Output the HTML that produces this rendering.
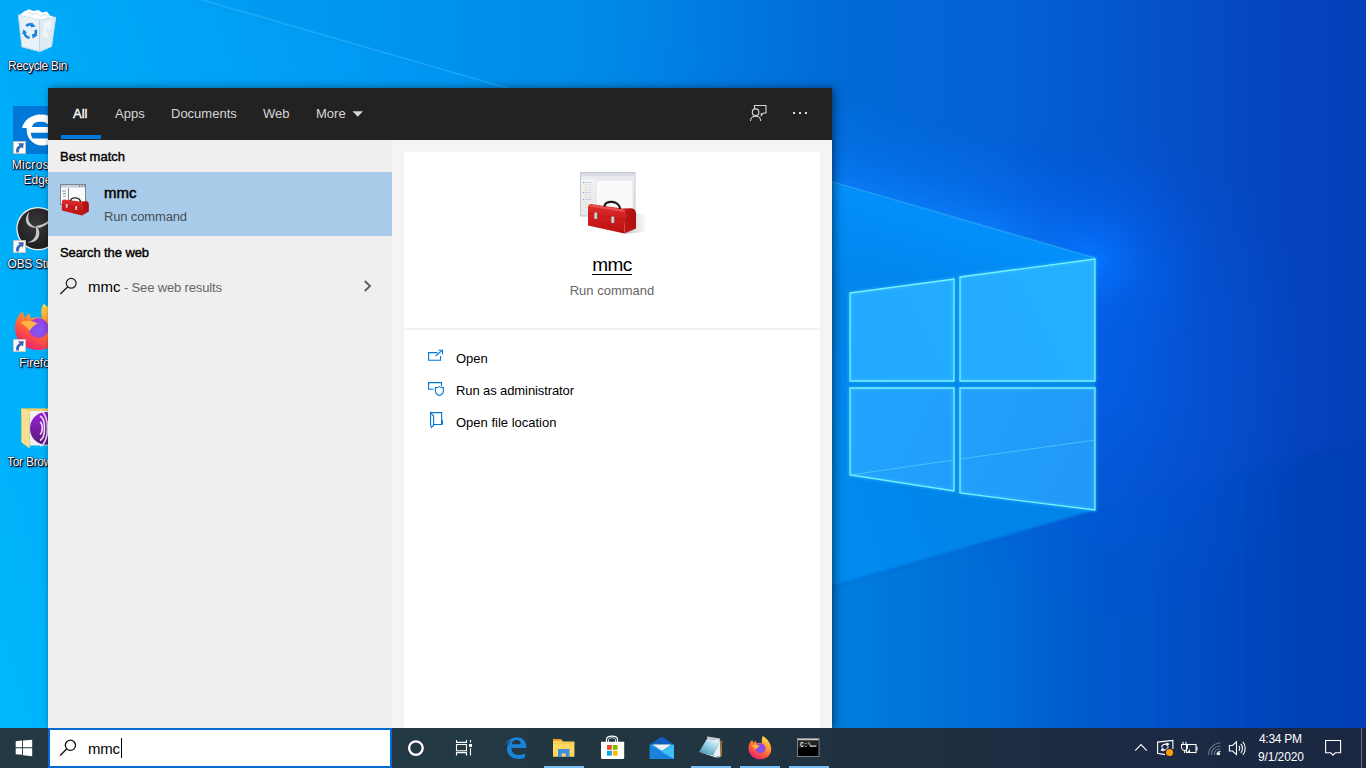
<!DOCTYPE html>
<html><head><meta charset="utf-8">
<style>
html,body{margin:0;padding:0}
body{width:1366px;height:768px;overflow:hidden;position:relative;font-family:"Liberation Sans",sans-serif;background:#0a6ad6}
.abs{position:absolute}
#bg{position:absolute;left:0;top:0}
/* panel */
#panel{position:absolute;left:48px;top:88px;width:784px;height:640px;background:#efefef;box-shadow:3px 0 9px rgba(0,0,0,.42),0 0 3px rgba(0,0,0,.12)}
#hdr{position:absolute;left:0;top:0;width:784px;height:52px;background:#222}
.tab{position:absolute;top:18px;font-size:13px;color:#d6d6d6;white-space:nowrap}
#left{position:absolute;left:0;top:52px;width:344px;height:588px;background:#efefef}
#gap{position:absolute;left:344px;top:52px;width:440px;height:588px;background:#f4f4f4}
#card{position:absolute;left:356px;top:64px;width:416px;height:576px;background:#fff}
.t{position:absolute;white-space:nowrap}
/* taskbar */
#tb{position:absolute;left:0;top:728px;width:1366px;height:40px;background:linear-gradient(90deg,#233842 0%,#223842 36%,#223542 50%,#1f2e40 70%,#1c2a43 82%,#1b2741 100%)}
.ul{position:absolute;top:38px;height:2px;width:40px;background:#78bdf4}
.dlabel{position:absolute;color:#fff;font-size:12px;line-height:15px;text-shadow:1px 1px 1px #000018,0 0 1px #000018,0 0 1px #000018,1px 1px 2px rgba(0,0,30,.9);white-space:nowrap;text-align:center}
</style></head>
<body>
<svg id="bg" width="1366" height="768" viewBox="0 0 1366 768">
 <defs>
  <linearGradient id="gTop" x1="0" y1="0" x2="1366" y2="0" gradientUnits="userSpaceOnUse">
   <stop offset="0" stop-color="#00a8f8"/>
   <stop offset="0.44" stop-color="#008ae8"/>
   <stop offset="0.615" stop-color="#016ad6"/>
   <stop offset="0.737" stop-color="#0461d8"/>
   <stop offset="0.81" stop-color="#0457cd"/>
   <stop offset="0.883" stop-color="#054cc4"/>
   <stop offset="0.95" stop-color="#0542bc"/>
   <stop offset="1" stop-color="#0440b8"/>
  </linearGradient>
  <linearGradient id="gBeam" x1="0" y1="650" x2="900" y2="350" gradientUnits="userSpaceOnUse">
   <stop offset="0" stop-color="#00b6fc"/>
   <stop offset="0.32" stop-color="#00a6f7"/>
   <stop offset="0.93" stop-color="#0088ee"/>
   <stop offset="1" stop-color="#0484e8"/>
  </linearGradient>
  <linearGradient id="gFloor" x1="832" y1="0" x2="1366" y2="0" gradientUnits="userSpaceOnUse">
   <stop offset="0" stop-color="#057ede"/>
   <stop offset="0.127" stop-color="#0077d9"/>
   <stop offset="0.326" stop-color="#0369d5"/>
   <stop offset="0.513" stop-color="#0457cb"/>
   <stop offset="0.7" stop-color="#044cc4"/>
   <stop offset="0.876" stop-color="#0441b6"/>
   <stop offset="1" stop-color="#043fb4"/>
  </linearGradient>
  <radialGradient id="gGlow" cx="1095" cy="260" r="115" gradientUnits="userSpaceOnUse">
   <stop offset="0" stop-color="#0474ff" stop-opacity="1"/>
   <stop offset="0.45" stop-color="#0468f4" stop-opacity="0.38"/>
   <stop offset="1" stop-color="#0460f0" stop-opacity="0"/>
  </radialGradient>
  <radialGradient id="gGlowB" cx="0" cy="0" r="1" gradientUnits="userSpaceOnUse" gradientTransform="translate(1110,370) scale(220,260)">
   <stop offset="0" stop-color="#0466f8" stop-opacity="0.5"/>
   <stop offset="0.5" stop-color="#0458e8" stop-opacity="0.3"/>
   <stop offset="1" stop-color="#0450e0" stop-opacity="0"/>
  </radialGradient>
  <linearGradient id="gPane" x1="850" y1="260" x2="1095" y2="510" gradientUnits="userSpaceOnUse">
   <stop offset="0" stop-color="#28a6fc"/>
   <stop offset="0.45" stop-color="#27a8ff"/>
   <stop offset="1" stop-color="#1a94f6"/>
  </linearGradient>
  <filter id="blur1" filterUnits="userSpaceOnUse" x="-500" y="-100" width="2000" height="1200"><feGaussianBlur stdDeviation="1.2"/></filter>
  <linearGradient id="gPaneT" x1="850" y1="380" x2="1095" y2="260" gradientUnits="userSpaceOnUse"><stop offset="0" stop-color="#22a8ff"/><stop offset="1" stop-color="#25b0ff"/></linearGradient>
  <linearGradient id="gPaneB" x1="850" y1="390" x2="1095" y2="510" gradientUnits="userSpaceOnUse"><stop offset="0" stop-color="#22a4fe"/><stop offset="1" stop-color="#2198f8"/></linearGradient>
  <linearGradient id="gBelow" x1="1000" y1="230.6" x2="969" y2="336" gradientUnits="userSpaceOnUse">
   <stop offset="0" stop-color="#0492ff" stop-opacity="0.85"/>
   <stop offset="0.55" stop-color="#0490ff" stop-opacity="0.4"/>
   <stop offset="1" stop-color="#0490ff" stop-opacity="0"/>
  </linearGradient>
  <filter id="blur05" filterUnits="userSpaceOnUse" x="-500" y="-100" width="2000" height="1200"><feGaussianBlur stdDeviation="0.6"/></filter>
  <filter id="blur15" filterUnits="userSpaceOnUse" x="-500" y="-100" width="2000" height="1200"><feGaussianBlur stdDeviation="1.5"/></filter>
  <filter id="blur3" filterUnits="userSpaceOnUse" x="-500" y="-100" width="2000" height="1200"><feGaussianBlur stdDeviation="3"/></filter>
  <linearGradient id="gAbove" x1="1025" y1="144" x2="1000" y2="230.6" gradientUnits="userSpaceOnUse">
   <stop offset="0" stop-color="#0a7cff" stop-opacity="0"/>
   <stop offset="0.6" stop-color="#0a7cff" stop-opacity="0.3"/>
   <stop offset="1" stop-color="#0c82ff" stop-opacity="0.7"/>
  </linearGradient>
  <linearGradient id="gAboveMask" x1="600" y1="0" x2="1150" y2="0" gradientUnits="userSpaceOnUse">
   <stop offset="0" stop-color="#fff" stop-opacity="0"/>
   <stop offset="0.45" stop-color="#fff" stop-opacity="1"/>
   <stop offset="0.85" stop-color="#fff" stop-opacity="1"/>
   <stop offset="1" stop-color="#fff" stop-opacity="0"/>
  </linearGradient>
  <linearGradient id="gAboveMask2" x1="600" y1="0" x2="1095" y2="0" gradientUnits="userSpaceOnUse">
   <stop offset="0" stop-color="#fff" stop-opacity="0"/>
   <stop offset="0.5" stop-color="#fff" stop-opacity="1"/>
   <stop offset="0.8" stop-color="#fff" stop-opacity="1"/>
   <stop offset="1" stop-color="#fff" stop-opacity="0.2"/>
  </linearGradient>
  <mask id="mAbove2" maskUnits="userSpaceOnUse" x="0" y="0" width="1366" height="768"><rect x="0" y="0" width="1366" height="768" fill="url(#gAboveMask2)"/></mask>
  <mask id="mAbove" maskUnits="userSpaceOnUse" x="0" y="0" width="1366" height="768"><rect x="0" y="0" width="1366" height="768" fill="url(#gAboveMask)"/></mask>
 </defs>
 <rect x="0" y="0" width="1366" height="768" fill="url(#gTop)"/>
 <polygon points="1095,510 1366,440 1366,768 -400,940" fill="url(#gFloor)" filter="url(#blur3)"/>
 <rect x="0" y="0" width="1366" height="768" fill="url(#gGlowB)"/>
 <rect x="0" y="0" width="1366" height="768" fill="url(#gGlow)"/>
 <polygon points="600,117.3 1095,258.5 1095,100 600,-40" fill="url(#gAbove)" mask="url(#mAbove2)"/>
 <polygon points="190,0 1095,258 1095,510 -400,940 -400,0" fill="url(#gBeam)" filter="url(#blur1)"/>
 <polygon points="600,117.3 1095,258.5 1095,400 600,300" fill="url(#gBelow)" mask="url(#mAbove)"/>
 <line x1="190" y1="-3.5" x2="1095" y2="258" stroke="#30b8ff" stroke-width="1.6" opacity="0.55" filter="url(#blur05)"/>
 <g fill="url(#gPaneT)">
  <polygon points="850,293 954,279 954,381 850,381"/>
  <polygon points="960,277 1095,259 1095,381 960,381"/>
 </g>
 <g fill="url(#gPaneB)">
  <polygon points="850,388 954,388 954,491 850,475"/>
  <polygon points="960,388 1095,388 1095,510 960,493"/>
 </g>
 <g fill="none" stroke="#50e0ff" stroke-width="3" opacity="0.35" filter="url(#blur15)">
  <polygon points="850,293 954,279 954,381 850,381"/>
  <polygon points="960,277 1095,259 1095,381 960,381"/>
  <polygon points="850,388 954,388 954,491 850,475"/>
  <polygon points="960,388 1095,388 1095,510 960,493"/>
 </g>
 <g fill="none" stroke="#78f0ff" stroke-width="1.3">
  <polygon points="850,293 954,279 954,381 850,381"/>
  <polygon points="960,277 1095,259 1095,381 960,381"/>
  <polygon points="850,388 954,388 954,491 850,475"/>
  <polygon points="960,388 1095,388 1095,510 960,493"/>
 </g>
 <g stroke="#5fd8ff" stroke-width="1" opacity="0.6">
  <line x1="850" y1="475" x2="954" y2="460"/>
  <line x1="960" y1="459" x2="1095" y2="440"/>
 </g>
</svg>

<!-- desktop icons -->
<div id="desk">
 <svg class="abs" style="left:0;top:0" width="80" height="480" viewBox="0 0 80 480">
  <defs>
   <linearGradient id="gFf" x1="52" y1="306" x2="26" y2="350" gradientUnits="userSpaceOnUse">
    <stop offset="0" stop-color="#ffe84a"/><stop offset="0.3" stop-color="#ffa436"/><stop offset="0.65" stop-color="#ff5a3a"/><stop offset="1" stop-color="#e8177e"/>
   </linearGradient>
   <radialGradient id="gFfc" cx="0.55" cy="0.6" r="0.6"><stop offset="0" stop-color="#7a5cf5"/><stop offset="1" stop-color="#a23be0"/></radialGradient>
   <linearGradient id="gBin" x1="0" y1="0" x2="1" y2="0"><stop offset="0" stop-color="#cfe6f4"/><stop offset="0.5" stop-color="#f2f6f8"/><stop offset="1" stop-color="#d6e8f2"/></linearGradient>
   <filter id="tsh" x="-20%" y="-20%" width="140%" height="140%"><feDropShadow dx="0" dy="1" stdDeviation="0.6" flood-color="#000" flood-opacity="0.6"/></filter>
  </defs>
  <!-- recycle bin -->
  <g>
   <path d="M18.2,14.8 L39.5,19.5 L55.7,17.2 L51.6,46.4 L39.6,51.6 L21.9,46.9 Z" fill="#e9f1f6"/>
   <path d="M39.5,19.5 L55.7,17.2 L51.6,46.4 L39.6,51.6 Z" fill="#dfeaf2"/>
   <path d="M18.2,14.8 L39.5,19.5 L39.6,51.6 L21.9,46.9 Z" fill="none" stroke="#b5d9ee" stroke-width="1"/>
   <path d="M39.5,19.5 L55.7,17.2 L51.6,46.4 L39.6,51.6" fill="none" stroke="#bfe0f2" stroke-width="1"/>
   <path d="M19.5,15 L24,11.5 L29,9.3 L33.5,11 L38.5,10 L42,12.5 L47,11.5 L50,15.5 L54.5,17 L39.5,19.5 Z" fill="#ffffff"/>
   <path d="M28,12 L33,14.5 L36,12.5 L40,16.5 L45,14 L48,17.5" fill="none" stroke="#c8d0d6" stroke-width="0.8"/>
   <path d="M44,22 L52,20 L50,30 L46,28 L48,38 L43,36 Z" fill="#f4f7f9" opacity="0.8"/>
   <g fill="none" stroke="#1d82dc" stroke-width="2.6">
    <path d="M26.2,26.2 C27.8,24.5 30.5,24 32.6,25"/>
    <path d="M35.6,29.8 C36.3,32 35.8,34.6 34,36.2"/>
    <path d="M29.6,37.8 C27.2,37.4 25.2,35.6 24.6,33.2"/>
   </g>
   <g fill="#1d82dc">
    <path d="M31.5,22.6 L35.8,26.4 L30.8,27.6 Z"/>
    <path d="M37.6,35 L32.6,38.6 L32,34 Z"/>
    <path d="M22.2,34.6 L23.4,29.2 L27,32.6 Z"/>
   </g>
  </g>
  <!-- edge tile -->
  <rect x="13" y="106" width="48" height="48" fill="#0078d7"/>
  <circle cx="42.3" cy="130" r="15.6" fill="#fff"/>
  <path d="M22,128.2 C23.5,120.5 31,114.6 40,114.4 L40,119.5 C33.5,120.5 29,124 27.5,128.5 C25.5,128 23.5,128 22,128.2 Z" fill="#fff"/>
  <path d="M32,127 C32.6,123.6 35.8,121.8 40.5,121.8 C45.2,121.8 48.4,123.6 49,127 Z" fill="#0078d7"/>
  <path d="M30.8,132.7 L62,132.7 L62,138.6 L32.6,138.6 C31.6,136.9 31,134.9 30.8,132.7 Z" fill="#0078d7"/>
  <!-- OBS -->
  <defs><radialGradient id="gObs" cx="0.45" cy="0.4" r="0.6"><stop offset="0" stop-color="#3a383b"/><stop offset="1" stop-color="#1e1d1f"/></radialGradient></defs>
  <circle cx="38" cy="228.6" r="21.7" fill="#f2f2f2"/>
  <circle cx="38" cy="228.6" r="20.4" fill="url(#gObs)"/>
  <path d="M29.5,211.5 C24.5,216.5 24.5,224.5 31,227 C33.5,228 36,227.8 37.5,227.2 C34,226.8 30.5,225 29,221.5 C27.8,218.5 28,215 29.5,211.5 Z" fill="#c8c8c8"/>
  <path d="M36.5,225.8 C40,225.5 44,224 48,221 L48,223.5 C44.5,226 41,227.6 38.5,228 Z" fill="#c8c8c8"/>
  <path d="M36.5,226 C39.5,229.5 40.5,235 37.5,239 C35,242 31,243 27.5,242.3 C31,241.5 34,239.5 35.2,236.5 C36.5,233 36.5,229.5 35.5,227 Z" fill="#c8c8c8"/>
  <!-- Firefox -->
  <path d="M22.5,311.6 L25,318 L28.8,312.8 L31,318.5 C34.5,317 38.5,317 42,318 C40.5,312 41.2,307.5 43.6,303.8 C53,310 60,319 60,330 C60,342 50,350 38,350 C25.5,350 15,340.5 15,328.5 C15,321 18,315 22.5,311.6 Z" fill="url(#gFf)"/>
  <circle cx="38.5" cy="328" r="10" fill="url(#gFfc)"/>
  <path d="M20.5,322.5 C25,320.5 32,320.5 37.5,323.5 C34.5,325 31.5,327.5 29.5,331 C27.5,327.5 24.5,325 20.5,322.5 Z" fill="#ffb540"/>
  <!-- Tor folder -->
  <rect x="21.3" y="408.4" width="40" height="4" fill="#f3cd5e"/>
  <rect x="29.7" y="411" width="32" height="34.5" fill="#f2f2f2"/>
  <path d="M21.3,408.4 L29.7,411 L29.7,448.5 L21.3,442.3 Z" fill="#fbdf8c"/>
  <defs><linearGradient id="gTor" x1="0" y1="0" x2="0" y2="1"><stop offset="0" stop-color="#9b20d8"/><stop offset="1" stop-color="#581a78"/></linearGradient></defs>
  <ellipse cx="46" cy="428.4" rx="16" ry="16.4" fill="url(#gTor)"/>
  <g fill="none" stroke="#f0e4f6" stroke-width="1.6">
   <path d="M40,422 C43,424 43,432 40,434.5"/>
   <path d="M40,416 C46,419 46,437.5 40,440.5"/>
   <path d="M40,410.5 C50,414 50,443 40,446"/>
  </g>
  <!-- shortcut arrows -->
  <g>
   <rect x="13.4" y="141.4" width="12.2" height="12.2" fill="#fbfbfb" stroke="#cdbfb3" stroke-width="0.8"/>
   <path d="M16.2,152.5 C15.6,149 16.8,146.5 19.6,145.5 L18.2,143.3 L23.8,143.3 L23,148.5 L21.4,147.2 C19.6,148 18.6,150 18.9,152.5 Z" fill="#3466b2"/>
   <rect x="13.4" y="240.4" width="12.2" height="12.2" fill="#fbfbfb" stroke="#cdbfb3" stroke-width="0.8"/>
   <path d="M16.2,251.5 C15.6,248 16.8,245.5 19.6,244.5 L18.2,242.3 L23.8,242.3 L23,247.5 L21.4,246.2 C19.6,247 18.6,249 18.9,251.5 Z" fill="#3466b2"/>
   <rect x="13.4" y="339.4" width="12.2" height="12.2" fill="#fbfbfb" stroke="#cdbfb3" stroke-width="0.8"/>
   <path d="M16.2,350.5 C15.6,347 16.8,344.5 19.6,343.5 L18.2,341.3 L23.8,341.3 L23,346.5 L21.4,345.2 C19.6,346 18.6,348 18.9,350.5 Z" fill="#3466b2"/>
  </g>
 </svg>
 <div class="dlabel" style="left:0;width:75px;top:58.8px;letter-spacing:-0.41px">Recycle Bin</div>
 <div class="dlabel" style="left:0;width:75px;top:157.8px;line-height:14.7px"><span style="letter-spacing:0.32px">Microsoft</span><br>Edge</div>
 <div class="dlabel" style="left:0;width:75px;top:256.8px;letter-spacing:-0.29px">OBS Studio</div>
 <div class="dlabel" style="left:0;width:75px;top:356px">Firefox</div>
 <div class="dlabel" style="left:0;width:75px;top:454.8px;letter-spacing:-0.27px">Tor Browser</div>
</div>

<div id="panel">
 <div id="hdr">
  <div class="tab" style="left:25px;color:#fff;-webkit-text-stroke:0.35px #fff">All</div>
  <div class="tab" style="left:67px">Apps</div>
  <div class="tab" style="left:123px">Documents</div>
  <div class="tab" style="left:215px">Web</div>
  <div class="tab" style="left:268px">More</div>
  <div class="abs" style="left:13px;top:47px;width:40px;height:4px;background:#0078d7"></div>
  <svg class="abs" style="left:0;top:0" width="784" height="52" viewBox="48 88 784 52">
   <path d="M352.5,111.3 L363,111.3 L357.75,116.8 Z" fill="#d6d6d6"/>
   <g fill="none" stroke="#d8d8d8" stroke-width="1.1">
    <path d="M754.5,109 L754.5,105.5 L766,105.5 L766,113 L763.5,113 L761.3,115.5 L761.3,113"/>
    <circle cx="755.6" cy="112.2" r="3.3"/>
    <path d="M750.5,121 C750.5,114.5 760.7,114.5 760.7,121"/>
   </g>
   <g fill="#e0e0e0"><rect x="793" y="112" width="2" height="2"/><rect x="799" y="112" width="2" height="2"/><rect x="805" y="112" width="2" height="2"/></g>
  </svg>
 </div>
 <div id="left">
  
  <div class="t" style="left:12px;top:9px;font-size:13px;color:#000;-webkit-text-stroke:0.4px #000">Best match</div>
  <div class="abs" style="left:0;top:32px;width:344px;height:64px;background:#a8cbe9"></div>
  <div class="t" style="left:56px;top:44px;font-size:15px;color:#000;-webkit-text-stroke:0.45px #000">mmc</div>
  <div class="t" style="left:56px;top:69px;font-size:13px;color:#464e57;letter-spacing:-0.15px">Run command</div>
  <div class="t" style="left:12px;top:105px;font-size:13px;color:#000;-webkit-text-stroke:0.4px #000;letter-spacing:-0.1px">Search the web</div>
  <div class="t" style="left:40px;top:138px;font-size:15px;color:#000">mmc<span style="font-size:13px;color:#666;letter-spacing:-0.15px"> - See web results</span></div>
   <svg class="abs" style="left:0;top:0" width="344" height="200" viewBox="48 140 344 200">
   <!-- small mmc icon -->
   <rect x="60.5" y="184.5" width="25" height="20" fill="#fbfbfb" stroke="#7d8594" stroke-width="1"/>
   <rect x="61" y="185" width="24" height="2.5" fill="#c9ced8"/>
   <rect x="79" y="185.5" width="1.2" height="1.2" fill="#5d6a80"/><rect x="81.5" y="185.5" width="1.2" height="1.2" fill="#5d6a80"/><rect x="84" y="185.5" width="1" height="1.2" fill="#5d6a80"/>
   <line x1="68.5" y1="188" x2="68.5" y2="204" stroke="#7d8594" stroke-width="1"/>
   <g stroke="#8a95a8" stroke-width="1"><line x1="62" y1="191" x2="66" y2="191"/><line x1="63" y1="193.5" x2="66" y2="193.5"/><line x1="63" y1="196" x2="66" y2="196"/></g>
   <path d="M62,201.5 C62,200 63,199.3 64.5,199.5 L80,201.5 C81.5,201.7 82.2,203 82.2,205.5 L82,215.6 L61.8,210.6 Z" fill="url(#gTbF)"/>
   <path d="M82.2,205.5 C82.2,203 81.5,201.7 80,201.5 L86.5,201.2 C88,201.4 88.8,202.5 88.8,204 L88.8,211.6 L82,215.6 Z" fill="url(#gTbS)"/>
   <path d="M62,205 L82,209.5 L88.8,207" fill="none" stroke="#9e0e0e" stroke-width="0.6" opacity="0.6"/>
   <path d="M70.5,201 C70.5,196.5 80,197 80.5,202" fill="none" stroke="#1e1e1e" stroke-width="1.3"/>
   <rect x="65.8" y="204" width="1.8" height="3.6" fill="#d8d8d8"/><rect x="75.3" y="206.2" width="1.8" height="3.6" fill="#d8d8d8"/>
   <!-- search icon -->
   <circle cx="71.2" cy="283.3" r="4.9" fill="none" stroke="#1a1a1a" stroke-width="1.2"/>
   <line x1="67.6" y1="287" x2="60.3" y2="294" stroke="#1a1a1a" stroke-width="1.3"/>
   <!-- chevron -->
   <path d="M364.8,281 L370,286 L364.8,291" fill="none" stroke="#5a5a5a" stroke-width="1.8"/>
  </svg>
 </div>
 <div id="gap"></div>
 <div id="card">
  <div class="t" style="left:0;width:416px;text-align:center;top:102px;font-size:19px;color:#000;letter-spacing:-0.6px"><span style="border-bottom:1.2px solid #000;line-height:16.5px;display:inline-block">mmc</span></div>
  <div class="t" style="left:0;width:416px;text-align:center;top:131px;font-size:13px;color:#666">Run command</div>
  <div class="abs" style="left:0;top:176px;width:416px;height:2px;background:#f2f2f2"></div>
  <div class="t" style="left:52px;top:199px;font-size:13px;color:#000">Open</div>
  <div class="t" style="left:52px;top:231px;font-size:13px;color:#000;letter-spacing:-0.1px">Run as administrator</div>
  <div class="t" style="left:52px;top:263px;font-size:13px;color:#000">Open file location</div>
  <svg class="abs" style="left:0;top:0" width="416" height="300" viewBox="404 152 416 300">
   <defs>
    <linearGradient id="gTbF" x1="0" y1="0" x2="0" y2="1"><stop offset="0" stop-color="#e03030"/><stop offset="0.45" stop-color="#d01c1c"/><stop offset="1" stop-color="#b81212"/></linearGradient>
    <linearGradient id="gTbS" x1="0" y1="0" x2="1" y2="0"><stop offset="0" stop-color="#c81818"/><stop offset="1" stop-color="#a80e0e"/></linearGradient>
    <linearGradient id="gWin" x1="0" y1="0" x2="0" y2="1"><stop offset="0" stop-color="#f4f5f7"/><stop offset="1" stop-color="#e6e8ec"/></linearGradient>
    <linearGradient id="gSh" x1="0" y1="0" x2="1" y2="0"><stop offset="0" stop-color="#000" stop-opacity="0.25"/><stop offset="1" stop-color="#000" stop-opacity="0"/></linearGradient>
   </defs>
   <!-- big mmc icon -->
   <rect x="580.5" y="172.5" width="54.5" height="43.5" fill="url(#gWin)" stroke="#c2c6ce" stroke-width="1"/>
   <rect x="581" y="173" width="53.5" height="3.5" fill="#d9dce2"/>
   <rect x="581" y="176.5" width="53.5" height="3" fill="#e9ebef"/>
   <rect x="596" y="180" width="37" height="36" fill="#fafafa" stroke="#cfd3d9" stroke-width="0.6"/>
   <g fill="#7ea6e0"><rect x="583" y="182" width="1.2" height="1.2"/><rect x="583" y="192" width="1.2" height="1.2"/><rect x="583" y="199" width="1.2" height="1.2"/></g>
   <g fill="#c9ced6"><rect x="585" y="182" width="7" height="0.8"/><rect x="585" y="192" width="6" height="0.8"/><rect x="585" y="199" width="7" height="0.8"/></g>
   <g fill="#f0d080"><rect x="585" y="184.5" width="1.5" height="1.2"/><rect x="585" y="187" width="1.5" height="1.2"/><rect x="585" y="189.5" width="1.5" height="1.2"/><rect x="585" y="194.5" width="1.5" height="1.2"/><rect x="585" y="197" width="1.5" height="1.2"/><rect x="585" y="201.5" width="1.5" height="1.2"/><rect x="585" y="204" width="1.5" height="1.2"/><rect x="585" y="206.5" width="1.5" height="1.2"/></g>
   <g fill="#d8dce2"><rect x="587.5" y="184.6" width="5" height="0.8"/><rect x="587.5" y="187.1" width="5" height="0.8"/><rect x="587.5" y="189.6" width="5" height="0.8"/><rect x="587.5" y="194.6" width="5" height="0.8"/><rect x="587.5" y="197.1" width="5" height="0.8"/></g>
   <path d="M636,213 L647,217 L646,232 L624,234 Z" fill="url(#gSh)"/>
   <path d="M588,207.5 C588,205 590,203.8 592.5,204.2 L622,208.6 C624.3,209 625.2,211.5 625.2,216.5 L624.3,233.6 L588,225.6 Z" fill="url(#gTbF)"/>
   <path d="M625.2,216.5 C625.2,211.5 624.3,209 622,208.6 L631.5,208.2 C634.3,208.5 636,210.5 636,213.5 L636,228.6 L624.3,233.6 Z" fill="url(#gTbS)"/>
   <path d="M589.5,206.5 C590,205 591.5,204.6 593,204.8 L621.5,209 C623,209.3 623.8,210.5 624.2,212 Z" fill="#ee6060" opacity="0.7"/>
   <path d="M588.3,213 L625,220.5 L636,216.5" fill="none" stroke="#9e0e0e" stroke-width="0.7" opacity="0.6"/>
   <path d="M604.5,206.5 C604.5,199.5 620,200.5 620,209" fill="none" stroke="#1e1e1e" stroke-width="2.2"/>
   <rect x="594.3" y="212.5" width="2.8" height="6.5" rx="0.8" fill="#dcdcdc" stroke="#7a7a7a" stroke-width="0.5"/>
   <rect x="611.3" y="216.5" width="2.8" height="6.5" rx="0.8" fill="#dcdcdc" stroke="#7a7a7a" stroke-width="0.5"/>
   <!-- action icons -->
   <g fill="none" stroke="#0078d7" stroke-width="1.1">
    <path d="M437.5,352.6 L428.6,352.6 L428.6,360.3 L440.5,360.3 L440.5,356"/>
    <path d="M435.5,356 L442.2,350.3"/>
    <path d="M438.5,350.3 L442.5,350.3 L442.5,354.2"/>
    <path d="M433.5,389.3 L428.6,389.3 L428.6,382.6 L441.5,382.6 L441.5,386.3"/>
    <path d="M439.4,386.6 C437.8,387.6 436.4,387.7 435.4,387.5 L435.4,391 C435.4,393 437.3,394.8 439.4,395.6 C441.5,394.8 443.4,393 443.4,391 L443.4,387.5 C442.4,387.7 441,387.6 439.4,386.6 Z"/>
    <path d="M430.6,412.6 L441.6,412.6 L441.6,424.5 L433.6,424.5"/>
    <path d="M430.6,412.6 L433.6,415.8 L433.6,425.5 L431.4,427.5 L430.6,424.5 Z"/>
    <path d="M441.6,420.5 L442.5,421 L442.5,424.5"/>
   </g>
  </svg>
 </div>
</div>

<div id="tb">
 <div class="abs" style="left:48px;top:0;width:340px;height:36px;border:2px solid #006cd4;background:#fff"></div>
 <div class="t" style="left:88px;top:12px;font-size:15px;color:#000;letter-spacing:-0.2px">mmc</div>
 <div class="abs" style="left:121px;top:10px;width:1px;height:20px;background:#000"></div>
 <div class="ul" style="left:544px"></div>
 <div class="ul" style="left:691px"></div>
 <div class="ul" style="left:740px"></div>
 <div class="ul" style="left:789px"></div>
 <div class="t" style="left:1259px;top:4px;font-size:12px;color:#fff;letter-spacing:-0.3px">4:34 PM</div>
 <div class="t" style="left:1258px;top:22px;font-size:12px;color:#fff;letter-spacing:-0.1px">9/1/2020</div>
 <div class="abs" style="left:1361px;top:0;width:1px;height:40px;background:#6a7080"></div>
 <svg class="abs" style="left:0;top:0" width="1366" height="40" viewBox="0 728 1366 40">
  <defs>
   <linearGradient id="gFf2" x1="0" y1="0" x2="0.7" y2="1">
    <stop offset="0" stop-color="#ffe03a"/><stop offset="0.35" stop-color="#ff8a1e"/><stop offset="0.7" stop-color="#ff3d45"/><stop offset="1" stop-color="#e8158a"/>
   </linearGradient>
   <radialGradient id="gFfc2" cx="0.45" cy="0.6" r="0.6"><stop offset="0" stop-color="#5b4ee8"/><stop offset="1" stop-color="#b83cc4"/></radialGradient>
   <linearGradient id="gNp" x1="0.7" y1="0" x2="0" y2="1"><stop offset="0" stop-color="#e6f6fb"/><stop offset="0.45" stop-color="#8ccbe0"/><stop offset="1" stop-color="#3a8aa6"/></linearGradient>
  </defs>
  <!-- start -->
  <g fill="#fff">
   <path d="M15.7,741.2 L22,740.6 L22,747.2 L15.7,747.2 Z"/>
   <path d="M22.9,740.5 L32.2,739.8 L32.2,747.2 L22.9,747.2 Z"/>
   <path d="M15.7,748.2 L22,748.2 L22,754.8 L15.7,754.2 Z"/>
   <path d="M22.9,748.2 L32.2,748.2 L32.2,756.2 L22.9,755.2 Z"/>
  </g>
  <!-- search icon -->
  <circle cx="70.4" cy="745.3" r="5.1" fill="none" stroke="#111" stroke-width="1.3"/>
  <line x1="66.6" y1="749.1" x2="60.2" y2="755.6" stroke="#111" stroke-width="1.4"/>
  <!-- cortana -->
  <circle cx="415.9" cy="748.1" r="6.8" fill="none" stroke="#fff" stroke-width="2.3"/>
  <!-- task view -->
  <g fill="none" stroke="#fff" stroke-width="1.1">
   <path d="M456.5,740 V742.4 H466.5 V740"/>
   <rect x="456.5" y="744.5" width="10" height="6.3"/>
   <path d="M456.5,755.6 V752.6 H466.5 V755.6"/>
   <path d="M470.5,740 V742.6 M470.5,748 V755.6"/>
  </g>
  <rect x="469" y="744" width="3" height="2.9" fill="#fff"/>
  <!-- edge -->
  <path d="M505.2,745.5 C507,739.5 513,736.8 518,737.3 C523.5,738 526.5,742.5 526.5,748 L511.5,748 C511.5,752.5 514.5,755 518.5,755 C521.5,755 523.5,754.3 525,753.3 L525,757.8 C523,758.6 520.5,759 518,759 C511.5,759 507,754.5 507,749 C507,745 509,742 512.5,740.3 C509.5,741 506.8,743 505.2,745.5 Z M511.7,744.3 L520.8,744.3 C520.8,741.5 519,740 516.3,740 C513.8,740 512,741.8 511.7,744.3 Z" fill="#1883d7"/>
  <!-- explorer -->
  <path d="M553,740 L561,740 L563,741.5 L574.4,741.5 L574.4,756.7 L553,756.7 Z" fill="#ffd75e"/>
  <path d="M553,739 L561,739 L563,741 L553,741 Z" fill="#e8a317"/>
  <rect x="553" y="742.5" width="21.4" height="1" fill="#f2c44a"/>
  <path d="M558,749 L569.5,749 L569.5,757 L565.8,757 L565.8,753.5 L561.7,753.5 L561.7,757 L558,757 Z" fill="#3e8fe0"/>
  <!-- store -->
  <path d="M601,741.8 L624.2,741.8 L624.2,757.5 C624.2,758.5 623.5,759 622.5,759 L602.7,759 C601.7,759 601,758.5 601,757.5 Z" fill="#fff"/>
  <path d="M606.5,742 L606.5,739.5 C606.5,735 617.5,735 617.5,739.5 L617.5,742" fill="none" stroke="#fff" stroke-width="1.2"/>
  <path d="M608.5,742 L608.5,740 C608.5,737 615.5,737 615.5,740 L615.5,742" fill="none" stroke="#fff" stroke-width="0.8"/>
  <rect x="607" y="745" width="4.8" height="4.8" fill="#f25022"/>
  <rect x="612.8" y="745" width="4.8" height="4.8" fill="#7fba00"/>
  <rect x="607" y="750.8" width="4.8" height="4.8" fill="#00a4ef"/>
  <rect x="612.8" y="750.8" width="4.8" height="4.8" fill="#ffb900"/>
  <!-- mail -->
  <path d="M649.8,744.6 L661.8,736.4 L673.9,744.6 Z" fill="#0f5fc0"/>
  <rect x="649.8" y="744.6" width="24.1" height="14.4" fill="#2aa8f0"/>
  <path d="M649.8,744.6 L673.9,759 L649.8,759 Z" fill="#1a82dc"/>
  <path d="M673.9,744.6 L673.9,759 L661.8,752 Z" fill="#3ec0f7"/>
  <path d="M652.6,744.4 L671.4,744.4 L662,750.8 Z" fill="#f0f0f0"/>
  <!-- notepad -->
  <path d="M699,752 L716,757.6 L720,757.2 L713,755.2 Z" fill="#f2f4f5"/>
  <path d="M707,738.8 L720,740.3 L713,755.4 L699,752 Z" fill="url(#gNp)"/>
  <path d="M720,740.3 L720.6,757 L713,755.4 Z" fill="#e9eff2"/>
  <rect x="720.4" y="740.6" width="1.3" height="15.5" fill="#c08a30"/>
  <path d="M707,737.6 L720,739.4" stroke="#d0d4d6" stroke-width="2"/>
  <!-- firefox -->
  <g transform="translate(740.9,582.6) scale(0.505)">
   <path d="M22.5,311.6 L25,318 L28.8,312.8 L31,318.5 C34.5,317 38.5,317 42,318 C40.5,312 41.2,307.5 43.6,303.8 C53,310 60,319 60,330 C60,342 50,350 38,350 C25.5,350 15,340.5 15,328.5 C15,321 18,315 22.5,311.6 Z" fill="url(#gFf)"/>
   <circle cx="38.5" cy="328" r="10" fill="url(#gFfc)"/>
   <path d="M20.5,322.5 C25,320.5 32,320.5 37.5,323.5 C34.5,325 31.5,327.5 29.5,331 C27.5,327.5 24.5,325 20.5,322.5 Z" fill="#ffb540"/>
  </g>
  <!-- cmd -->
  <rect x="797.5" y="738.4" width="21.5" height="18.1" fill="#000" stroke="#9a9a9a" stroke-width="0.8"/>
  <rect x="797.9" y="738.8" width="20.7" height="1.6" fill="#c8c8c8"/>
  <path d="M798,741 L818.5,741 L818.5,745 C812,745 804,746 798,749 Z" fill="#3a3a3a" opacity="0.6"/>
  <text x="800" y="746.8" font-family="Liberation Mono" font-size="6.5" fill="#e8e8e8" font-weight="bold">C:\</text>
  <rect x="810.5" y="745.5" width="6" height="1.2" fill="#e8e8e8"/>
  <!-- tray chevron -->
  <path d="M1135.2,750.6 L1141,744.6 L1146.8,750.6" fill="none" stroke="#fff" stroke-width="1.1"/>
  <!-- sync icon -->
  <g fill="none" stroke="#fff" stroke-width="1.1">
   <path d="M1165,754.6 L1157.6,753.2 L1157.6,742.1 L1172.9,740.4 L1172.9,749"/>
   <path d="M1161.6,747.5 C1161.6,745 1164,743.8 1167,744.2"/>
   <path d="M1168.2,746.5 C1168.2,749 1166,750.2 1163,749.8"/>
  </g>
  <path d="M1166,742.6 L1169.6,743.8 L1167,746.8 Z" fill="#fff"/>
  <path d="M1164,751.4 L1160.4,750.2 L1163,747.2 Z" fill="#fff"/>
  <circle cx="1169.6" cy="752.4" r="4.3" fill="#1b2741"/>
  <circle cx="1169.6" cy="752.4" r="3.5" fill="#ff9e0b"/>
  <!-- power/battery -->
  <g fill="none" stroke="#fff" stroke-width="1.1">
   <path d="M1181.5,744.5 L1187.5,744.5 L1187.5,747 C1187.5,749 1186,750.5 1184.5,750.5 C1183,750.5 1181.5,749 1181.5,747 Z"/>
   <line x1="1183" y1="741.8" x2="1183" y2="744.5"/><line x1="1186" y1="741.8" x2="1186" y2="744.5"/>
   <line x1="1184.5" y1="750.5" x2="1184.5" y2="753"/>
   <rect x="1186.5" y="744.5" width="9.5" height="8"/>
   <line x1="1197" y1="746.5" x2="1197" y2="750.5"/>
  </g>
  <path d="M1187,752.5 L1190,749 L1190,752.5 Z" fill="#fff"/>
  <!-- wifi -->
  <g fill="none" stroke="#6c7687" stroke-width="1.1">
   <path d="M1208.5,755 C1208.5,748 1214,743 1220.5,743"/>
   <path d="M1211.3,755 C1211.3,749.5 1215,746 1220.5,746"/>
   <path d="M1214.2,755 C1214.2,751.5 1216.5,749 1220.5,749"/>
  </g>
  <path d="M1217,755 C1217,752.5 1218.5,751.5 1220.5,751.5" fill="none" stroke="#fff" stroke-width="1.1"/>
  <circle cx="1218.8" cy="753.8" r="1.4" fill="#fff"/>
  <!-- volume -->
  <g fill="none" stroke="#fff" stroke-width="1.1">
   <path d="M1229.4,745.5 L1232.5,745.5 L1236.5,741.8 L1236.5,754.6 L1232.5,751 L1229.4,751 Z"/>
   <path d="M1238.8,745.8 C1240,747 1240,749.5 1238.8,750.8"/>
   <path d="M1240.8,743.8 C1243,746 1243,750.5 1240.8,752.8"/>
   <path d="M1242.8,741.8 C1246,745 1246,751.5 1242.8,754.8"/>
  </g>
  <!-- notification -->
  <path d="M1325.6,740.5 L1340.6,740.5 L1340.6,752.8 L1335.3,752.8 L1333,755.2 L1330.8,752.8 L1325.6,752.8 Z" fill="none" stroke="#fff" stroke-width="1.1"/>
 </svg>
</div>
</body></html>
